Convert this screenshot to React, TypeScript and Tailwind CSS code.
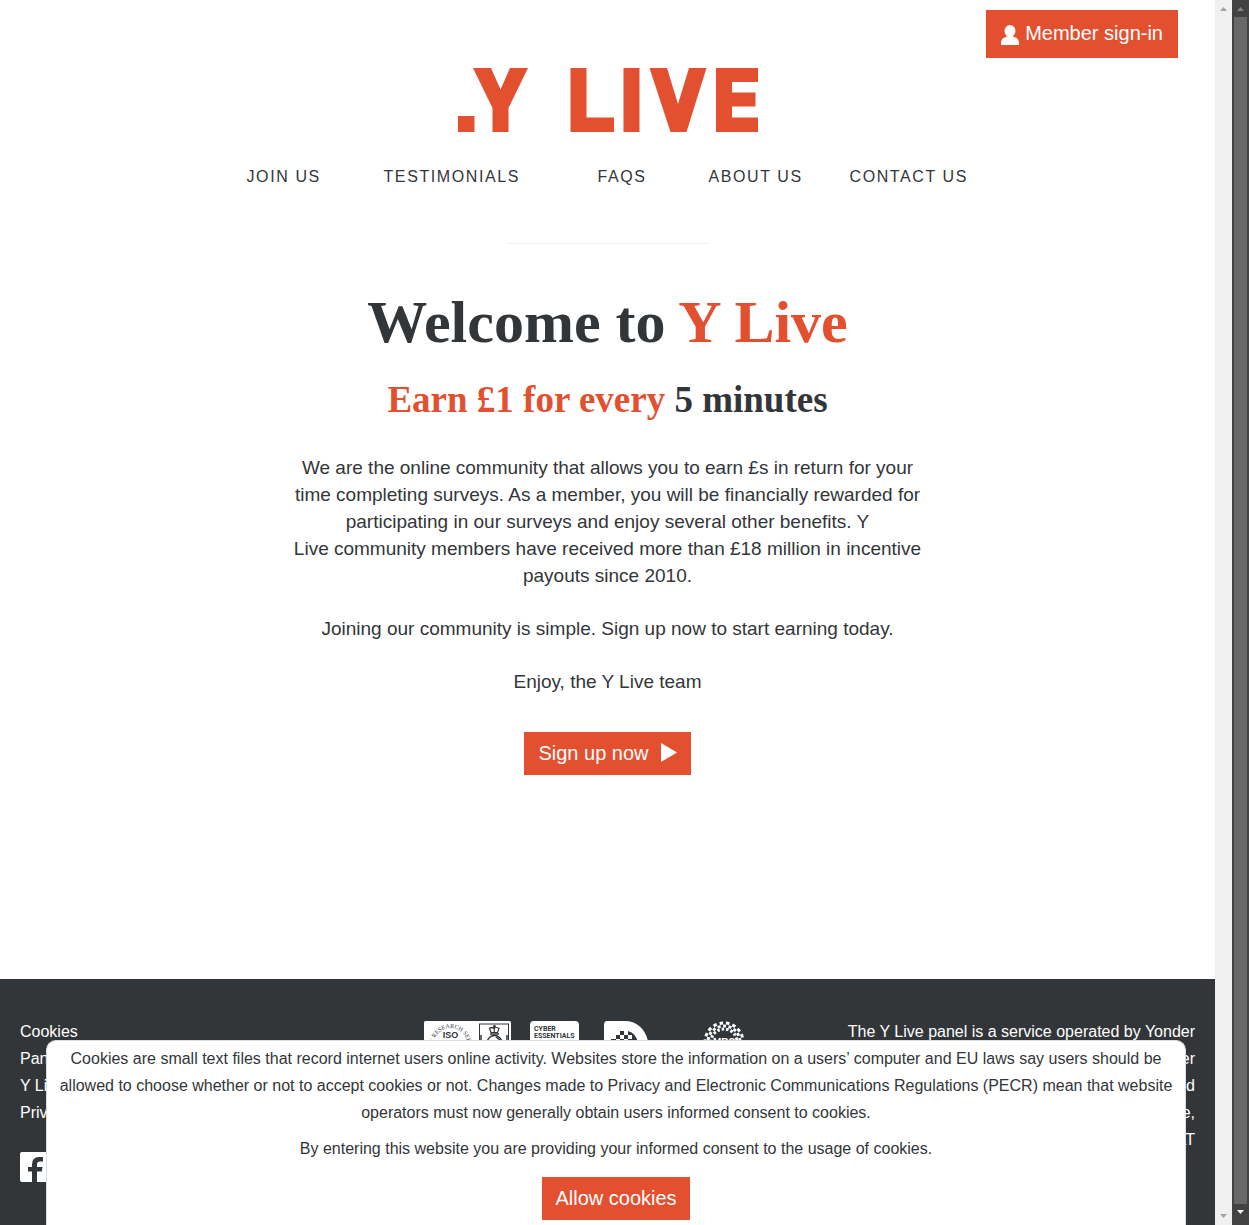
const Arrow = ({ fill, down }: { fill: string; down?: boolean }) => (
  <svg viewBox="0 0 17 17" className={down ? "size-[17px] rotate-180" : "size-[17px]"} aria-hidden="true">
    <path d="M5 11h7L8.500 7z" fill={fill} />
  </svg>
);

function Logo() {
  return (
    <svg viewBox="0 0 300 64" className="mx-auto h-16 w-[300px]" role="img" aria-label="Y Live" fill="#e35030">
      <path d="M0 48h16.500v16H0z" />
      <path d="M15 0h18l9.500 21.500L52 0h18L50.500 40v24H34.500V40z" />
      <path d="M112.500 0h16v49.500H156V64h-43.500z" />
      <path d="M165.500 0h16v64h-16z" />
      <path d="M191.500 0H209l11 36 11-36h17.500l-20 64h-16z" />
      <path d="M258 0h42v14h-26v10.500h23.500v14H274v11h26V64h-42z" />
    </svg>
  );
}

const nav = [
  { label: "JOIN US", width: "w-[137px]" },
  { label: "TESTIMONIALS", width: "w-[214px]" },
  { label: "FAQS", width: "w-[111px]" },
  { label: "ABOUT US", width: "w-[141px]" },
  { label: "CONTACT US", width: "w-[183px]" },
];

function IsoBadge() {
  return (
    <svg viewBox="0 0 87 48" className="h-12 w-[87px]" role="img" aria-label="ISO certified">
      <rect width="87" height="48" rx="1.500" fill="#fff" />
      <path id="iso-ring" d="M11.500 32a17 17 0 1 1 30 0" fill="none" />
      <text fontSize="6" fill="#323639" fontFamily="Liberation Serif">
        <textPath href="#iso-ring" startOffset="50%" textAnchor="middle">ET RESEARCH SERV</textPath>
      </text>
      <text x="26.500" y="17" fontSize="9" fontWeight="700" textAnchor="middle" fill="#323639" fontFamily="Liberation Sans">ISO</text>
      <rect x="55.500" y="3" width="29" height="42" fill="none" stroke="#323639" />
      <path d="M67 11.500l-1.500-4q2-2 4.500 0 2.500-2 5 0l-1.500 4zM70.300 4v7M69 5.200h3" fill="none" stroke="#323639" strokeWidth="1.200" />
      <path d="M66 13h9" stroke="#323639" strokeWidth="1.500" />
      <circle cx="70.500" cy="22" r="7.500" fill="none" stroke="#323639" strokeWidth="1.300" />
      <path d="M72 16l4 3M57 14v5M83 14v5" stroke="#323639" strokeWidth="1.500" />
    </svg>
  );
}

function CyberBadge() {
  return (
    <svg viewBox="0 0 49 48" className="h-12 w-[49px]" role="img" aria-label="Cyber Essentials">
      <rect width="49" height="48" rx="4" fill="#fff" />
      <text x="4" y="10" fontSize="7" fontWeight="700" fill="#323639" fontFamily="Roboto">CYBER</text>
      <text x="4" y="17" fontSize="7" fontWeight="700" fill="#323639" fontFamily="Roboto">ESSENTIALS</text>
    </svg>
  );
}

function DBadge() {
  return (
    <svg viewBox="0 0 46 48" className="h-12 w-[46px]" role="img" aria-label="Data">
      <path d="M4 0h18c11 0 20 7 23 20v28H1V4q0-4 3-4z" fill="#fff" />
      <path d="M17 10h4v4h-4zM13 14h4v4h-4zM21 14h4v4h-4zM8 18h5v4H8zM17 18h4v4h-4zM25 10q8 2 10 12H25v-4h4v-4h-4z" fill="#323639" />
    </svg>
  );
}

function MrsBadge() {
  return (
    <svg viewBox="0 0 42 42" className="size-[42px]" role="img" aria-label="MRS">
      <g fill="none" stroke="#fff" strokeWidth="3">
        <circle cx="21" cy="21" r="19" strokeDasharray="3.500 3" />
        <circle cx="21" cy="21" r="16" strokeDasharray="3 2.500" strokeDashoffset="3" />
        <circle cx="21" cy="21" r="13" strokeDasharray="2.500 2" />
      </g>
      <text x="21" y="25" fontSize="10" fontWeight="700" textAnchor="middle" fill="#fff" fontFamily="Liberation Sans">MRS</text>
    </svg>
  );
}

export default function App() {
  return (
    <div className="flex h-screen overflow-hidden bg-white font-['Liberation_Sans',Arial,sans-serif] text-[#323639]">
      <div className="relative flex min-w-0 flex-1">
        <div className="flex min-w-0 flex-1 flex-col">
          <header className="pt-2.5">
            <div className="flex justify-end pr-[37px]">
              <button className="flex h-12 items-center gap-1.5 bg-[#e35030] px-[15px] pb-0.5 text-xl text-white">
                <svg viewBox="0 0 18 20" className="mt-1 h-5 w-[18px]" fill="#fff" aria-hidden="true">
                  <ellipse cx="9" cy="6" rx="5.500" ry="6" />
                  <path d="M0 20v-2q0-5 5-6l2-1h4l2 1q5 1 5 6v2z" />
                </svg>
                Member sign-in
              </button>
            </div>
            <a href="#home" className="mt-2.5 block">
              <Logo />
            </a>
            <nav className="mx-auto mt-[33px] flex w-fit pl-16">
              {nav.map((n) => (
                <a key={n.label} href="#nav" className={`${n.width} text-base tracking-widest`}>
                  {n.label}
                </a>
              ))}
            </nav>
            <hr className="mx-auto mt-[54px] w-[200px] border-[#eeeeee]" />
          </header>

          <main className="flex flex-1 flex-col items-center text-center">
            <h1 className="mt-[42px] font-['Liberation_Serif',serif] text-[60px] leading-[72px] font-bold">
              Welcome to <span className="text-[#e35030]">Y Live</span>
            </h1>
            <h2 className="mt-[22px] font-['Liberation_Serif',serif] text-[37px] leading-10 font-bold">
              <span className="text-[#e35030]">Earn £1 for every</span> 5 minutes
            </h2>
            <div className="mt-[34px] w-full max-w-[640px] space-y-[26px] text-[19px] leading-[27px]">
              <p>
                We are the online community that allows you to earn £s in return for your
                <br />
                time completing surveys. As a member, you will be financially rewarded for
                <br />
                participating in our surveys and enjoy several other benefits. Y
                <br />
                Live community members have received more than £18 million in incentive
                <br />
                payouts since 2010.
              </p>
              <p>Joining our community is simple. Sign up now to start earning today.</p>
              <p>Enjoy, the Y Live team</p>
            </div>
            <button className="mt-[37px] flex h-[43px] items-center gap-3 bg-[#e35030] px-3.5 pb-0.5 text-xl text-white">
              Sign up now
              <svg viewBox="0 0 16 20" className="h-5 w-4" fill="#fff" aria-hidden="true">
                <path d="M0 0l16 9.500L0 19z" />
              </svg>
            </button>
          </main>

          <footer className="flex h-[246px] shrink-0 justify-between bg-[#323639] px-5 pt-[39px] text-base leading-[27px] text-white">
            <div className="w-[357px]">
              <ul>
                <li><a href="#cookies">Cookies</a></li>
                <li><a href="#terms">Panel terms</a></li>
                <li><a href="#ylive">Y Live rewards</a></li>
                <li><a href="#privacy">Privacy policy</a></li>
              </ul>
              <a href="#facebook" aria-label="Facebook" className="mt-[26px] block w-fit">
                <svg viewBox="0 0 30 30" className="size-[30px]">
                  <rect width="30" height="30" rx="2" fill="#fff" />
                  <path d="M12 30V19.500H8v-4.500h4v-2.500q0-7.500 7-7.500h4v4.500h-3q-3 0-3 3V15h5.500l-.7 4.500H17V30z" fill="#323639" />
                </svg>
              </a>
            </div>
            <div className="flex items-start pt-[3px]">
              <IsoBadge />
              <div className="ml-[19px]"><CyberBadge /></div>
              <div className="ml-6"><DBadge /></div>
              <div className="ml-[54px]"><MrsBadge /></div>
            </div>
            <p className="w-[404px] text-right">
              The Y Live panel is a service operated by Yonder
              <br />
              Data Solutions Limited, part of Yonder
              <br />
              Registered in England
              <br />
              Northburgh House,
              <br />
              London, EC1V 0AT
            </p>
          </footer>
        </div>

        <div className="flex w-[17px] flex-col justify-between bg-[#f0f0f0]">
          <Arrow fill="#a3a3a3" />
          <Arrow fill="#a3a3a3" down />
        </div>

        <section aria-label="Cookie notice" className="absolute inset-x-0 bottom-0 mx-auto h-[185px] max-w-[1140px] rounded-t-[10px] border border-b-0 border-[#dddddd] bg-white px-2.5 pt-1 text-center text-base leading-[27px]">
          <p>
            Cookies are small text files that record internet users online activity. Websites store the information on a users’ computer and EU laws say users should be
            allowed to choose whether or not to accept cookies or not. Changes made to Privacy and Electronic Communications Regulations (PECR) mean that website
            operators must now generally obtain users informed consent to cookies.
          </p>
          <p className="mt-[9px]">By entering this website you are providing your informed consent to the usage of cookies.</p>
          <button className="mt-[15px] h-[43px] bg-[#e35030] px-[13px] pb-0.5 text-xl text-white">Allow cookies</button>
        </section>
      </div>

      <div className="flex w-[17px] flex-col bg-[#424242]">
        <Arrow fill="#868686" />
        <div className="mx-0.5 flex-1 bg-[#686868]" />
        <div className="h-[21px]">
          <Arrow fill="#ffffff" down />
        </div>
      </div>
    </div>
  );
}
